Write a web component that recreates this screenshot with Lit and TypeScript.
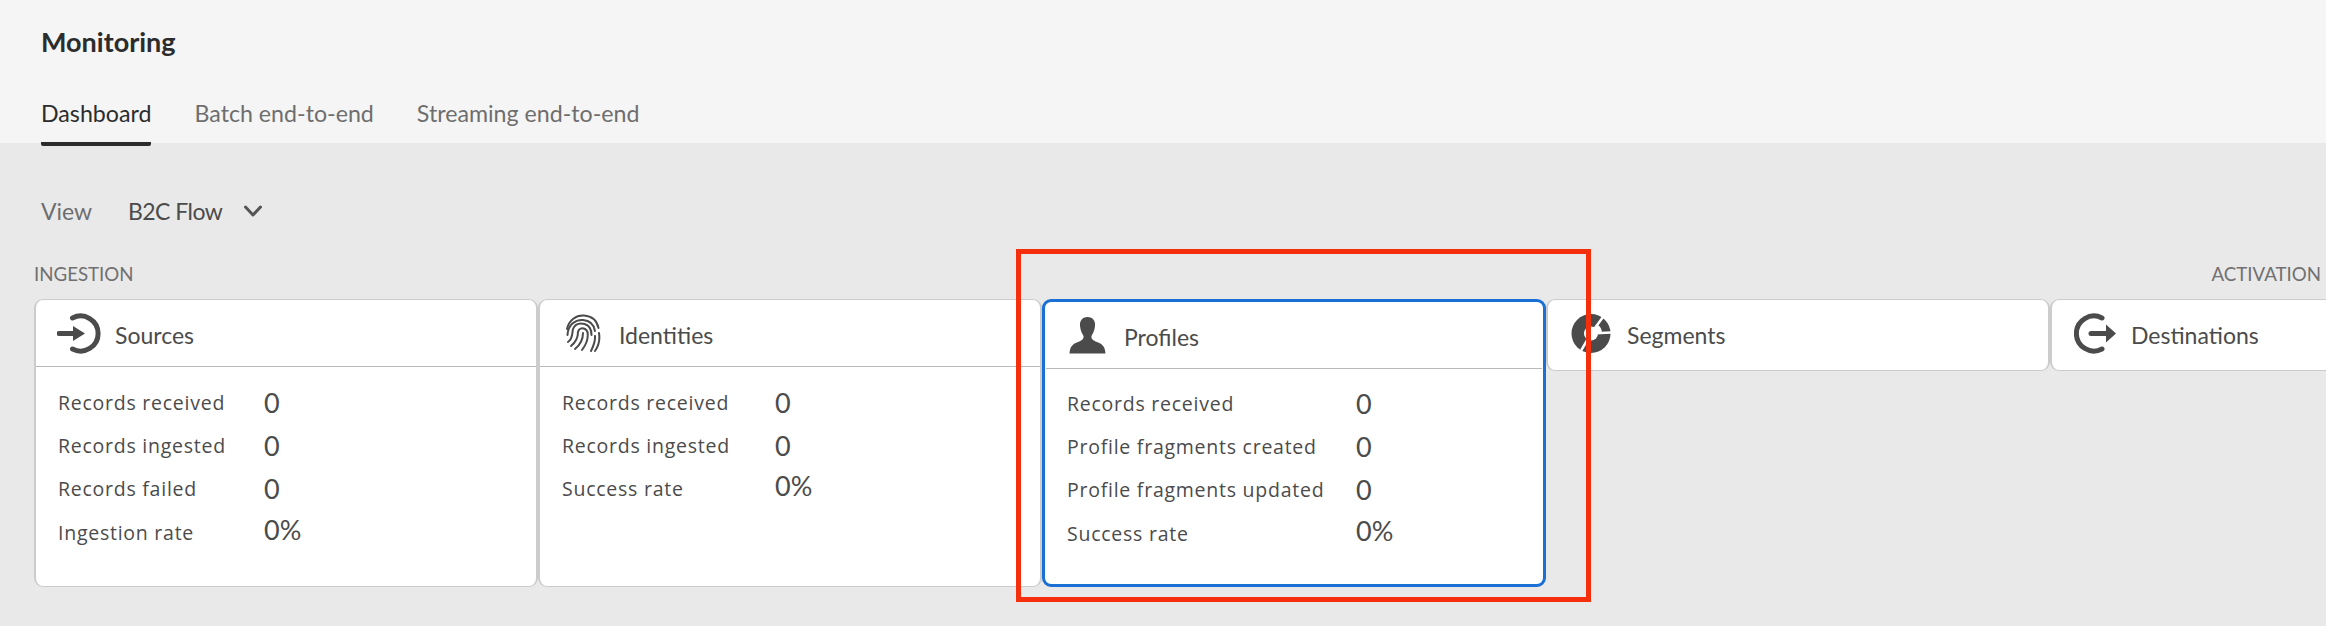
import { LitElement, html, css, svg } from "lit";
import { customElement } from "lit/decorators.js";

const ICONS: Record<string, unknown> = {
  sources: html`<svg width="44" height="41" viewBox="0 0 44 41">
    <path d="M15.5 5A17.5 17.5 0 1 1 15.5 36" fill="none" stroke="#4b4b4b" stroke-width="5" stroke-linecap="round"/>
    <path d="M2 20.5H18" fill="none" stroke="#4b4b4b" stroke-width="5" stroke-linecap="round"/>
    <path d="M16 13L28 20.5L16 28Z" fill="#4b4b4b"/>
  </svg>`,
  identities: html`<svg width="36" height="40" viewBox="0 0 36 40" fill="none" stroke="#4b4b4b" stroke-width="2" stroke-linecap="round">
    ${svg`<path d="M2 16C4 7 11 2 19 2.500C27 3 32 8 33.500 15"/>
    <path d="M2.500 22C3 12 10 6.500 18 7C25 7.500 29 12 30 18"/>
    <path d="M3 29C8 26 7 20 8 16C10 11 15 10 19.500 11C25 12.500 26.500 18 26.500 22"/>
    <path d="M6 33C11 29 13 24 13 19C13.500 15.500 17 14.500 20 16C23 17.500 23 22 22.500 25C22 29 20 33 17 37"/>
    <path d="M10 36C15 32 18 27 18 20"/>
    <path d="M34 20C35 26 33.500 33 30 38"/>
    <path d="M26 38C28.500 33 30.500 28 30 23"/>`}
  </svg>`,
  profiles: html`<svg width="37" height="37" viewBox="0 0 37 37">
    <path fill="#4b4b4b" d="M18.500 0C24 0 26.500 4 26 9C25.500 14 23.500 17 22.500 19C22 22 24 23.500 28 25C33 27 36 29 36.500 36.500H.5C1 29 4 27 9 25C13 23.500 15 22 14.500 19C13.500 17 11.500 14 11 9C10.500 4 13 0 18.500 0Z"/>
  </svg>`,
  segments: html`<svg width="40" height="39" viewBox="0 0 40 39">
    <circle cx="20" cy="19.500" r="19.500" fill="#4b4b4b"/>
    <path d="M20 19.500L26.500 10.600A11 11 0 0 1 31 18.900Z" fill="#fff"/>
    <path d="M20 19.500L34.700 -.7M20 19.500L45 18.200M20 19.500L7.500 41.100" stroke="#fff" stroke-width="2.500" fill="none"/>
    <circle cx="20" cy="19.500" r="7" fill="#fff"/>
  </svg>`,
  destinations: html`<svg width="42" height="41" viewBox="0 0 42 41">
    <path d="M28 5A17.500 17.500 0 1 0 28 36" fill="none" stroke="#4b4b4b" stroke-width="5" stroke-linecap="round"/>
    <path d="M17 20.500H33" fill="none" stroke="#4b4b4b" stroke-width="5" stroke-linecap="round"/>
    <path d="M32 11.500L42 20.500L32 29.500Z" fill="#4b4b4b"/>
  </svg>`,
};

interface Card {
  icon: string;
  title: string;
  labelCol?: number;
  selected?: boolean;
  rows?: [string, string][];
}

const CARDS: Card[] = [
  {
    icon: "sources",
    title: "Sources",
    labelCol: 206,
    rows: [
      ["Records received", "0"],
      ["Records ingested", "0"],
      ["Records failed", "0"],
      ["Ingestion rate", "0%"],
    ],
  },
  {
    icon: "identities",
    title: "Identities",
    labelCol: 213,
    rows: [
      ["Records received", "0"],
      ["Records ingested", "0"],
      ["Success rate", "0%"],
    ],
  },
  {
    icon: "profiles",
    title: "Profiles",
    labelCol: 289,
    selected: true,
    rows: [
      ["Records received", "0"],
      ["Profile fragments created", "0"],
      ["Profile fragments updated", "0"],
      ["Success rate", "0%"],
    ],
  },
  { icon: "segments", title: "Segments" },
  { icon: "destinations", title: "Destinations" },
];

@customElement("app-root")
export class AppRoot extends LitElement {
  static styles = css`
    :host {
      display: block;
      position: relative;
      width: 2326px;
      height: 626px;
      overflow: hidden;
      background: #e9e9e9;
      font-family: Lato, "Noto Sans", sans-serif;
      color: #4b4b4b;
    }
    .header {
      position: relative;
      height: 143px;
      box-sizing: border-box;
      padding: 26px 0 0 41px;
      background: #f5f5f5;
    }
    .title {
      font-size: 27px;
      line-height: 32px;
      font-weight: 700;
      color: #2c2c2c;
    }
    .tabs {
      display: flex;
      gap: 43px;
      margin-top: 39px;
    }
    .tab {
      height: 49px;
      box-sizing: border-box;
      border-bottom: 4px solid transparent;
      font-size: 23.2px;
      line-height: 32px;
      color: #6e6e6e;
    }
    .tab.active {
      color: #2c2c2c;
      border-bottom-color: #2c2c2c;
      border-radius: 2px;
    }
    .main {
      padding: 52px 5px 0 34px;
    }
    .view {
      display: flex;
      align-items: center;
      height: 32px;
      margin-left: 7px;
      font-size: 23px;
    }
    .view-label {
      width: 87px;
      color: #6e6e6e;
    }
    .view-value {
      margin-right: 22px;
      letter-spacing: -0.55px;
    }
    .sections {
      display: flex;
      justify-content: space-between;
      margin-top: 37px;
      font-size: 18.7px;
      line-height: 20px;
      color: #707070;
    }
    .cards {
      display: flex;
      align-items: flex-start;
      gap: 0.5px;
      margin-top: 15px;
    }
    .card {
      flex: 0 0 503.5px;
      box-sizing: border-box;
      height: 72px;
      border-style: solid;
      border-color: #cccccc;
      border-width: 1px 2px;
      border-radius: 9px;
      background: #fff;
    }
    .card.tall {
      height: 288px;
    }
    .card.selected {
      border-width: 3px;
      border-color: #1b70d6;
    }
    .card-head {
      display: flex;
      align-items: center;
      height: 66px;
      padding-left: 19.5px;
      font-size: 23px;
    }
    .card-icon {
      display: flex;
      flex: 0 0 46px;
      justify-content: center;
      margin-right: 13.5px;
    }
    .card-title {
      position: relative;
      top: 2px;
    }
    .divider {
      height: 1px;
      background: #b9b9b9;
    }
    .selected .divider {
      margin: 0 1px;
    }
    .card-body {
      display: grid;
      grid-auto-rows: 43.2px;
      align-items: center;
      padding: 14px 0 0 22px;
    }
    .selected .card-body {
      padding-top: 13px;
    }
    .label {
      font-family: "Open Sans", sans-serif;
      font-size: 19.5px;
      letter-spacing: 0.75px;
      white-space: nowrap;
    }
    .value {
      font-size: 27px;
    }
    .value.pct {
      position: relative;
      top: -3px;
    }
    .marker {
      position: absolute;
      left: 1016px;
      top: 249px;
      width: 575px;
      height: 353px;
      box-sizing: border-box;
      border: 5px solid #f52e0c;
      pointer-events: none;
    }
  `;

  private renderCard(c: Card) {
    const cls = `card ${c.rows ? "tall" : ""} ${c.selected ? "selected" : ""}`;
    return html`<div class=${cls}>
      <div class="card-head">
        <span class="card-icon">${ICONS[c.icon]}</span>
        <span class="card-title">${c.title}</span>
      </div>
      ${c.rows
        ? html`<div class="divider"></div>
            <div class="card-body" style="grid-template-columns:${c.labelCol}px 1fr">
              ${c.rows.map(
                ([l, v]) => html`<span class="label">${l}</span>
                  <span class="value ${v.includes("%") ? "pct" : ""}">${v}</span>`
              )}
            </div>`
        : ""}
    </div>`;
  }

  render() {
    return html`
      <div class="header">
        <div class="title">Monitoring</div>
        <div class="tabs">
          <div class="tab active">Dashboard</div>
          <div class="tab">Batch end-to-end</div>
          <div class="tab">Streaming end-to-end</div>
        </div>
      </div>
      <div class="main">
        <div class="view">
          <span class="view-label">View</span>
          <span class="view-value">B2C Flow</span>
          <svg width="18" height="12" viewBox="0 0 18 12">
            <path d="M1.500 2L9 10L16.500 2" fill="none" stroke="#555" stroke-width="3" stroke-linecap="round" stroke-linejoin="round"/>
          </svg>
        </div>
        <div class="sections"><span>INGESTION</span><span>ACTIVATION</span></div>
        <div class="cards">${CARDS.map((c) => this.renderCard(c))}</div>
      </div>
      <div class="marker"></div>
    `;
  }
}
